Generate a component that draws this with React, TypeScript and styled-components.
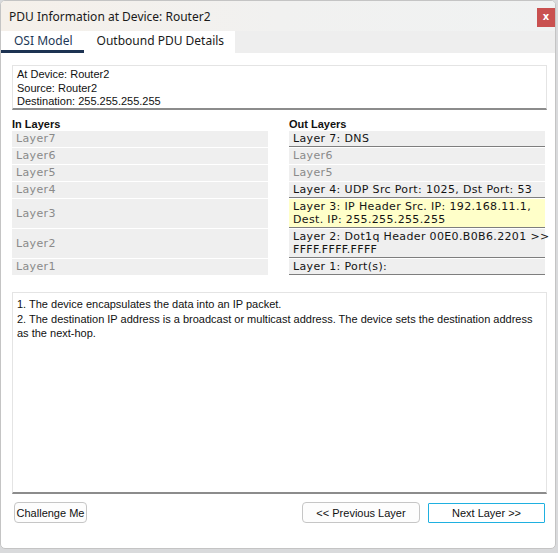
import React from "react";
import styled, { createGlobalStyle } from "styled-components";

const Global = createGlobalStyle`
  html, body { margin: 0; padding: 0; }
  body { background: #d9dadc; width: 558px; height: 553px; overflow: hidden; }
  * { box-sizing: border-box; }
`;

const Window = styled.div`
  width: 556px;
  height: 549px;
  background: #ffffff;
  border: 1px solid #c4c4c4;
  border-radius: 5px;
  overflow: hidden;
  display: flex;
  flex-direction: column;
`;

const TitleBar = styled.div`
  height: 30px;
  flex: none;
  display: flex;
  align-items: center;
  justify-content: space-between;
  padding-left: 8px;
  background: linear-gradient(90deg, #f5f0ea 0%, #f1f1f0 50%, #f0f2f2 100%);
`;

const Title = styled.div`
  font-family: "Noto Sans", "Open Sans", sans-serif;
  font-size: 12px;
  color: #1a1a1a;
`;

const CloseButton = styled.div`
  width: 18px;
  height: 19px;
  margin-top: 2px;
  background: #c95150;
  color: #ffffff;
  font-family: "DejaVu Sans", sans-serif;
  font-weight: bold;
  font-size: 10px;
  line-height: 18px;
  text-align: center;
`;

const TabBar = styled.div`
  height: 22px;
  flex: none;
  display: flex;
  background: #eeeeee;
`;

const Tab = styled.div<{ $active?: boolean }>`
  background: #ffffff;
  padding: 0 11px 0 13px;
  font-family: "Noto Sans", "Open Sans", sans-serif;
  font-size: 12px;
  line-height: 19px;
  color: ${(p) => (p.$active ? "#1d3857" : "#1a1a1a")};
  border-bottom: 3px solid ${(p) => (p.$active ? "#1d3352" : "#ffffff")};
`;

const Body = styled.div`
  flex: 1;
  display: flex;
  flex-direction: column;
  padding: 12px 8px 0 11px;
`;

const InfoBox = styled.div`
  height: 45px;
  border: 1px solid #e4e4e4;
  border-bottom: 2px solid #8c8c8c;
  padding: 2px 4px;
  font-family: "Liberation Sans", Arial, sans-serif;
  font-size: 11px;
  line-height: 13.5px;
  color: #111111;
`;

const Columns = styled.div`
  display: grid;
  grid-template-columns: 256px 256px;
  column-gap: 21px;
  margin-top: 8px;
`;

const Column = styled.div`
  display: flex;
  flex-direction: column;
`;

const ColumnLabel = styled.div`
  font-family: "Liberation Sans", Arial, sans-serif;
  font-weight: bold;
  font-size: 11px;
  line-height: 13px;
  color: #111111;
`;

const Rows = styled.div`
  display: flex;
  flex-direction: column;
  gap: 1px;
`;

const LayerRow = styled.div<{ $tall?: boolean; $active?: boolean; $hl?: boolean }>`
  height: ${(p) => (p.$tall ? 29 : 16)}px;
  display: flex;
  flex-direction: column;
  justify-content: center;
  padding: 0 4px;
  background: ${(p) => (p.$hl ? "#ffffc9" : "#efefef")};
  border-bottom: 1px solid ${(p) => (p.$active ? "#7e7e7e" : "#efefef")};
  font-family: "DejaVu Sans", Verdana, sans-serif;
  font-size: 11px;
  letter-spacing: 0.35px;
  line-height: 13px;
  white-space: nowrap;
  color: ${(p) => (p.$active ? "#141414" : "#8a8a8a")};
`;

const Description = styled.div`
  height: 202px;
  margin-top: 17px;
  border: 1px solid #e4e4e4;
  border-bottom: 2px solid #8c8c8c;
  padding: 4px 4px;
  font-family: "Liberation Sans", Arial, sans-serif;
  font-size: 11px;
  line-height: 14.5px;
  color: #111111;
`;

const ButtonBar = styled.div`
  display: flex;
  align-items: center;
  margin-top: 8px;
  padding-left: 2px;
  padding-right: 2px;
`;

const Spacer = styled.div`
  flex: 1;
`;

const Button = styled.div<{ $primary?: boolean; $w: number }>`
  width: ${(p) => p.$w}px;
  height: ${(p) => (p.$primary ? 20 : 21)}px;
  margin-left: ${(p) => (p.$primary ? 8 : 0)}px;
  border: ${(p) => (p.$primary ? "1.5px solid #1fb0e0" : "1px solid #c6c6c6")};
  border-radius: ${(p) => (p.$primary ? 1 : 4)}px;
  background: ${(p) => (p.$primary ? "#ffffff" : "#fdfdfd")};
  font-family: "Liberation Sans", Arial, sans-serif;
  font-size: 11px;
  color: #111111;
  display: flex;
  align-items: center;
  justify-content: center;
`;

const inLayers: { label: string; tall?: boolean }[] = [
  { label: "Layer7" },
  { label: "Layer6" },
  { label: "Layer5" },
  { label: "Layer4" },
  { label: "Layer3", tall: true },
  { label: "Layer2", tall: true },
  { label: "Layer1" },
];

const outLayers: { lines: string[]; tall?: boolean; active?: boolean; hl?: boolean }[] = [
  { lines: ["Layer 7: DNS"], active: true },
  { lines: ["Layer6"] },
  { lines: ["Layer5"] },
  { lines: ["Layer 4: UDP Src Port: 1025, Dst Port: 53"], active: true },
  { lines: ["Layer 3: IP Header Src. IP: 192.168.11.1,", "Dest. IP: 255.255.255.255"], tall: true, active: true, hl: true },
  { lines: ["Layer 2: Dot1q Header 00E0.B0B6.2201 >>", "FFFF.FFFF.FFFF"], tall: true, active: true },
  { lines: ["Layer 1: Port(s):"], active: true },
];

export default function App() {
  return (
    <>
      <Global />
      <Window>
        <TitleBar>
          <Title>PDU Information at Device: Router2</Title>
          <CloseButton>x</CloseButton>
        </TitleBar>
        <TabBar>
          <Tab $active>OSI Model</Tab>
          <Tab>Outbound PDU Details</Tab>
        </TabBar>
        <Body>
          <InfoBox>
            <div>At Device: Router2</div>
            <div>Source: Router2</div>
            <div>Destination: 255.255.255.255</div>
          </InfoBox>
          <Columns>
            <Column>
              <ColumnLabel>In Layers</ColumnLabel>
              <Rows>
                {inLayers.map((l) => (
                  <LayerRow key={l.label} $tall={l.tall}>
                    {l.label}
                  </LayerRow>
                ))}
              </Rows>
            </Column>
            <Column>
              <ColumnLabel>Out Layers</ColumnLabel>
              <Rows>
                {outLayers.map((l, i) => (
                  <LayerRow key={i} $tall={l.tall} $active={l.active} $hl={l.hl}>
                    {l.lines.map((t) => (
                      <div key={t}>{t}</div>
                    ))}
                  </LayerRow>
                ))}
              </Rows>
            </Column>
          </Columns>
          <Description>
            <div>1. The device encapsulates the data into an IP packet.</div>
            <div>
              2. The destination IP address is a broadcast or multicast address. The device sets the destination address
              as the next-hop.
            </div>
          </Description>
          <ButtonBar>
            <Button $w={73}>Challenge Me</Button>
            <Spacer />
            <Button $w={118}>&lt;&lt; Previous Layer</Button>
            <Button $w={117} $primary>
              Next Layer &gt;&gt;
            </Button>
          </ButtonBar>
        </Body>
      </Window>
    </>
  );
}
